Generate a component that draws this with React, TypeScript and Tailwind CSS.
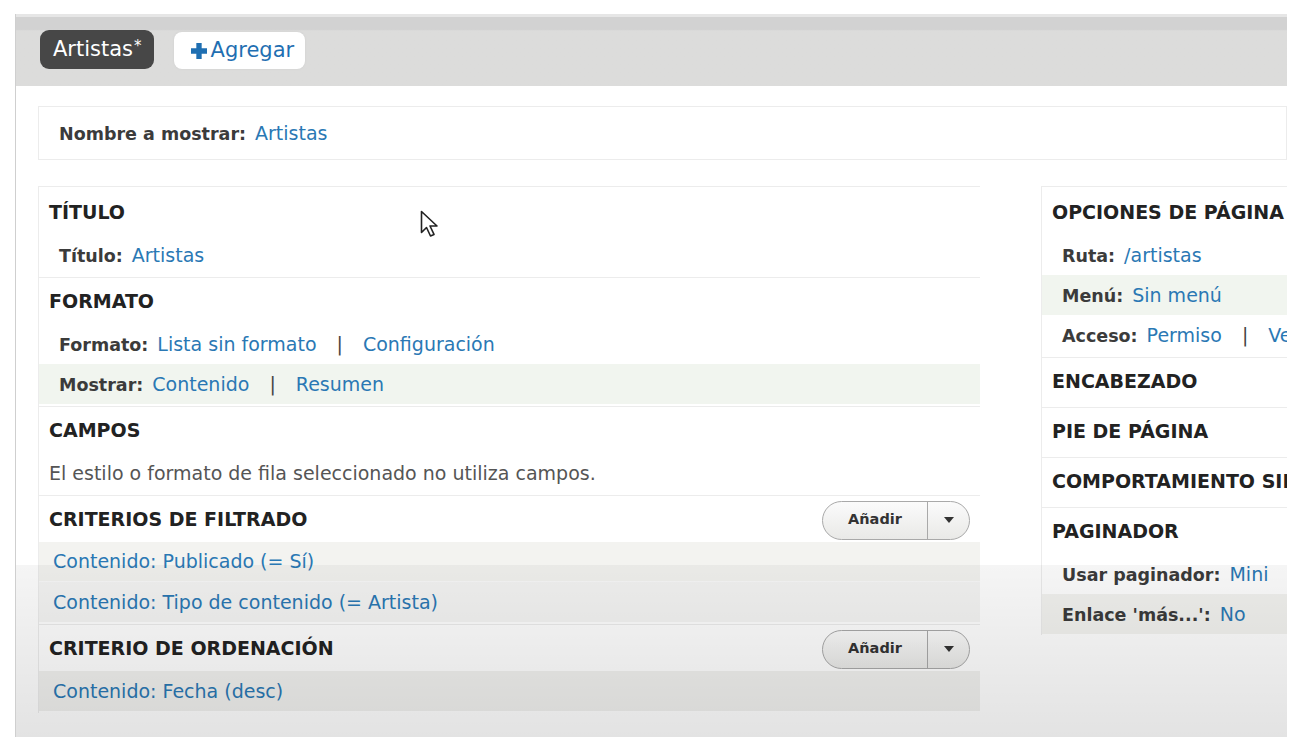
const font = { fontFamily: '"DejaVu Sans", Verdana, sans-serif' };

function Label({ k, children }: { k: string; children: React.ReactNode }) {
  return (
    <span className="flex items-baseline">
      <span className="text-[17.5px] font-bold text-[#3b3b3b]">{k}:</span>
      <span className="ml-[9px]">{children}</span>
    </span>
  );
}

function A({ children }: { children: React.ReactNode }) {
  return <a className="text-[#2a78b4]">{children}</a>;
}

function Sep() {
  return <span className="mx-[20px] text-[#444]">|</span>;
}

function Header({ title, add }: { title: string; add?: boolean }) {
  return (
    <div className="flex h-[46px] items-center justify-between whitespace-nowrap pl-[10px] pr-[10px]">
      <h3 className="text-[19px] font-bold uppercase text-[#222]">{title}</h3>
      {add && <AddButton />}
    </div>
  );
}

function AddButton() {
  return (
    <div className="mt-[2px] flex h-[39px] w-[148px] items-stretch rounded-full border border-[#a9a9a9] bg-linear-to-b from-[#fbfbfb] to-[#e9e9e7] text-[14.5px] font-bold text-[#333]">
      <span className="flex flex-1 items-center justify-center">Añadir</span>
      <span className="flex w-[42px] items-center justify-center border-l border-[#a9a9a9]">
        <svg width="10" height="6" viewBox="0 0 10 6"><path d="M0 0h10L5 6z" fill="#333" /></svg>
      </span>
    </div>
  );
}

function Row({ children, tone, pad = "pl-[20px]" }: { children: React.ReactNode; tone?: string; pad?: string }) {
  return <div className={`flex h-[40px] items-center whitespace-nowrap ${pad} ${tone ?? ""}`}>{children}</div>;
}

function Section({ children }: { children: React.ReactNode }) {
  return <div className="border-b border-[#ececec] pb-[2px]">{children}</div>;
}

export default function App() {
  return (
    <div className="min-h-screen bg-white pl-[15px] pr-[13px] pt-[14px] text-[19px]" style={font}>
      <div className="relative h-[723px] overflow-hidden border-l border-[#cfcfcf] bg-white">
        {/* tab bar */}
        <div className="flex h-[72px] items-start gap-[20px] border-t-[3px] border-[#e6e6e6] bg-linear-to-b from-[#d2d2d2] from-[18%] to-[#dcdcdb] to-[20%] pl-[24px] pt-[13px]">
          <span className="flex h-[39px] items-center rounded-[9px] bg-[#474747] pl-[13px] pr-[12px] text-[21px] text-white">
            Artistas<span className="-mt-[6px] ml-[1px] text-[15px]">*</span>
          </span>
          <span className="mt-[2px] flex h-[37px] items-center gap-[4px] rounded-[8px] bg-white pl-[17px] pr-[11px] text-[21px] text-[#1f6fb2] shadow-[0_0_2px_#ccc]">
            <svg width="16" height="16" viewBox="0 0 15 15"><path d="M5 0h5v5h5v5h-5v5H5v-5H0V5h5z" fill="#1f6fb2" /></svg>
            Agregar
          </span>
        </div>

        <div className="pl-[22px] pt-[20px]">
          <div className="flex h-[54px] items-center border border-[#ececec] pl-[20px]">
            <Label k="Nombre a mostrar">
              <A>Artistas</A>
            </Label>
          </div>

          <div className="mt-[26px] flex gap-[61px]">
            {/* left column */}
            <div className="w-[942px] shrink-0 border-l border-t border-[#ececec] pt-[2px]">
              <Section>
                <Header title="Título" />
                <Row><Label k="Título"><A>Artistas</A></Label></Row>
              </Section>
              <Section>
                <Header title="Formato" />
                <Row><Label k="Formato"><A>Lista sin formato</A></Label><Sep /><A>Configuración</A></Row>
                <Row tone="bg-[#f1f5ef]"><Label k="Mostrar"><A>Contenido</A></Label><Sep /><A>Resumen</A></Row>
              </Section>
              <Section>
                <Header title="Campos" />
                <Row pad="pl-[10px]"><span className="text-[#555]">El estilo o formato de fila seleccionado no utiliza campos.</span></Row>
              </Section>
              <Section>
                <Header title="Criterios de filtrado" add />
                <Row pad="pl-[14px]" tone="bg-[#f3f3f0] border-b border-[#fafafa]"><A>Contenido: Publicado (= Sí)</A></Row>
                <Row pad="pl-[14px]" tone="bg-[#f5f5f4]"><A>Contenido: Tipo de contenido (= Artista)</A></Row>
              </Section>
              <div className="pb-[2px]">
                <Header title="Criterio de ordenación" add />
                <Row pad="pl-[14px]" tone="bg-[#f1f1ef]"><A>Contenido: Fecha (desc)</A></Row>
              </div>
            </div>

            {/* right column */}
            <div className="w-[340px] shrink-0 self-start border-l border-t border-[#ececec] bg-white pt-[2px]">
              <Section>
                <Header title="Opciones de página" />
                <Row><Label k="Ruta"><A>/artistas</A></Label></Row>
                <Row tone="bg-[#f1f5ef]"><Label k="Menú"><A>Sin menú</A></Label></Row>
                <Row><Label k="Acceso"><A>Permiso</A></Label><Sep /><A>Ver contenido publicado</A></Row>
              </Section>
              <Section><div className="pb-[1px]"><Header title="Encabezado" /></div></Section>
              <Section><div className="pb-[1px]"><Header title="Pie de página" /></div></Section>
              <Section><div className="pb-[1px]"><Header title="Comportamiento sin resultados" /></div></Section>
              <div className="pb-[1px]">
                <Header title="Paginador" />
                <Row><Label k="Usar paginador"><A>Mini</A></Label></Row>
                <Row tone="bg-[#f3f3f0]"><Label k="Enlace 'más...'"><A>No</A></Label></Row>
              </div>
            </div>
          </div>
        </div>

        {/* video overlay shading */}
        <div className="pointer-events-none absolute inset-x-0 bottom-0 h-[172px] bg-linear-to-b from-black/[0.04] to-black/[0.11]" />

        {/* mouse cursor */}
        <svg className="pointer-events-none absolute left-[404px] top-[196px]" width="20" height="30" viewBox="0 0 20 30">
          <path d="M1.5 1.5v21l5-5 4 8.5 3.5-1.6-4-8.4h7z" fill="#fff" stroke="#222" strokeWidth="1.6" strokeLinejoin="round" />
        </svg>
      </div>
    </div>
  );
}
